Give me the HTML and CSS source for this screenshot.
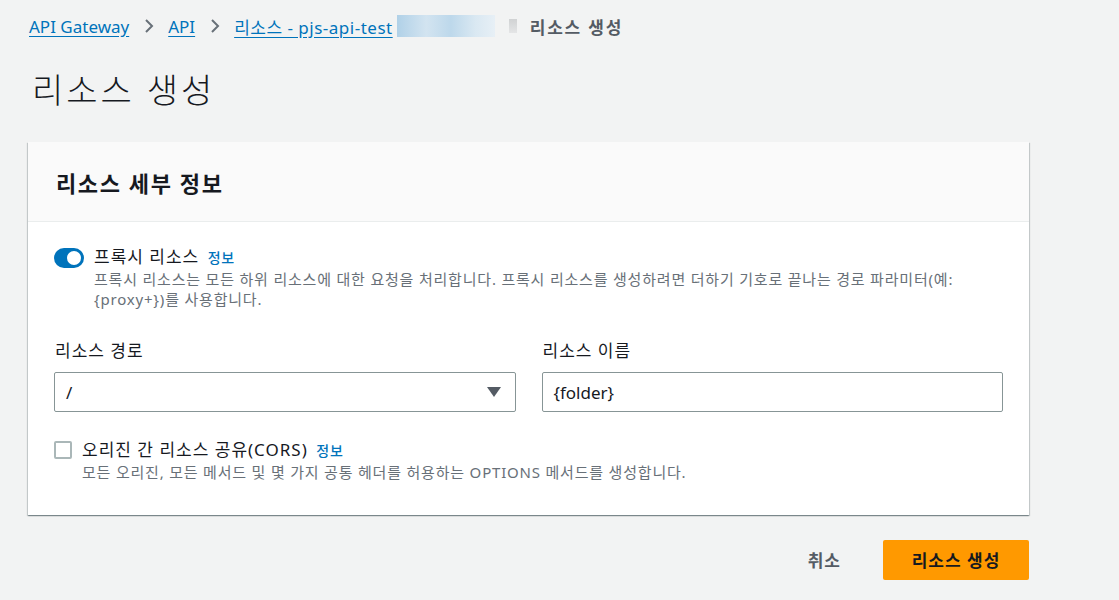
FILE: index.html
```html
<!DOCTYPE html>
<html lang="ko">
<head>
    <meta charset="UTF-8">
    <meta name="viewport" content="width=device-width, initial-scale=1.0">
    <title>리소스 생성</title>
    <link rel="stylesheet" href="styles.css">
</head>
<body>
    <div class="page">
        <nav class="breadcrumbs">
            <a href="#">API Gateway</a>
            <span class="sep">
                <svg width="12" height="16" viewBox="0 0 12 16"><path d="M3 2l6 6-6 6" fill="none" stroke="#687078" stroke-width="2"/></svg>
            </span>
            <a href="#">API</a>
            <span class="sep">
                <svg width="12" height="16" viewBox="0 0 12 16"><path d="M3 2l6 6-6 6" fill="none" stroke="#687078" stroke-width="2"/></svg>
            </span>
            <a href="#" class="masked">리소스 - pjs-api-test<span class="blur"></span></a>
            <span class="sep blur-sep"></span>
            <span class="current">리소스 생성</span>
        </nav>

        <h1 class="page-title">리소스 생성</h1>

        <div class="card">
            <div class="card-header">
                <h2>리소스 세부 정보</h2>
            </div>
            <div class="card-body">
                <div class="option">
                    <span class="toggle"><span class="knob"></span></span>
                    <div class="option-text">
                        <div class="option-label">프록시 리소스 <a href="#" class="info">정보</a></div>
                        <p class="option-desc">프록시 리소스는 모든 하위 리소스에 대한 요청을 처리합니다. 프록시 리소스를 생성하려면 더하기 기호로 끝나는 경로 파라미터(예: {proxy+})를 사용합니다.</p>
                    </div>
                </div>

                <div class="fields">
                    <div class="field">
                        <label>리소스 경로</label>
                        <div class="select">
                            <span>/</span>
                            <svg width="14" height="10" viewBox="0 0 14 10"><path d="M0 0h14L7 10z" fill="#545b64"/></svg>
                        </div>
                    </div>
                    <div class="field">
                        <label>리소스 이름</label>
                        <div class="input">{folder}</div>
                    </div>
                </div>

                <div class="option cors">
                    <span class="checkbox"></span>
                    <div class="option-text">
                        <div class="option-label">오리진 간 리소스 공유(CORS) <a href="#" class="info">정보</a></div>
                        <p class="option-desc">모든 오리진, 모든 메서드 및 몇 가지 공통 헤더를 허용하는 OPTIONS 메서드를 생성합니다.</p>
                    </div>
                </div>
            </div>
        </div>

        <div class="actions">
            <button class="btn-link">취소</button>
            <button class="btn-primary">리소스 생성</button>
        </div>
    </div>
</body>
</html>
```

FILE: styles.css
```css
body {
    margin: 0;
    background-color: #f2f3f3;
    font-family: "Noto Sans", "Noto Sans CJK KR", sans-serif;
    color: #16191f;
}
.page {
    padding: 14px 0 0 28px;
    width: 1001px;
}
.breadcrumbs {
    display: flex;
    align-items: center;
    height: 24px;
    font-size: 17px;
    padding-left: 1px;
}
.breadcrumbs a {
    color: #0073bb;
    text-decoration: underline;
    text-underline-offset: 3px;
}
.breadcrumbs .sep {
    display: flex;
    align-items: center;
    margin: 0 13px 0 14px;
}
.masked {
    display: flex;
    align-items: center;
    letter-spacing: 0.5px;
}
.blur {
    display: inline-block;
    width: 98px;
    height: 22px;
    margin-left: 4px;
    background: linear-gradient(90deg, #a9cde6, #cfe2f0 30%, #b7d5ea 55%, #d7e7f2 80%, #e6eff6);
    opacity: 0.9;
}
.blur-sep {
    width: 8px;
    height: 14px;
    background: linear-gradient(#d0d2d3, #e4e5e6);
    margin: 0 21px 0 16px;
}
.current {
    color: #545b64;
    font-weight: bold;
    letter-spacing: 1.8px;
}
.page-title {
    margin: 24px 0 0 4px;
    font-size: 34px;
    font-weight: 300;
    line-height: 56px;
    letter-spacing: 3px;
}
.card {
    margin-top: 24px;
    background-color: #fff;
    box-shadow: 0 1px 1px 0 rgba(0, 28, 36, 0.3), 1px 1px 1px 0 rgba(0, 28, 36, 0.15), -1px 1px 1px 0 rgba(0, 28, 36, 0.15);
}
.card-header {
    height: 79px;
    background-color: #fafafa;
    border-bottom: 1px solid #eaeded;
    display: flex;
    align-items: center;
    padding: 0 28px;
}
.card-header h2 {
    margin: 0;
    font-size: 22px;
    font-weight: bold;
    letter-spacing: 1.6px;
}
.card-body {
    padding: 24px 26px 33px;
}
.option {
    display: flex;
    gap: 10px;
}
.toggle {
    flex: none;
    width: 30px;
    height: 20px;
    margin-top: 2px;
    border-radius: 10px;
    background-color: #0073bb;
    position: relative;
}
.knob {
    position: absolute;
    right: 3px;
    top: 3px;
    width: 14px;
    height: 14px;
    border-radius: 50%;
    background-color: #fff;
}
.option-label {
    font-size: 17px;
    line-height: 22px;
    letter-spacing: 1px;
}
.info {
    color: #0073bb;
    font-size: 14px;
    font-weight: 500;
    letter-spacing: 0.8px;
    margin-left: 3px;
    text-decoration: none;
}
.option-desc {
    margin: 0;
    font-size: 15px;
    line-height: 20px;
    letter-spacing: 0.8px;
    color: #687078;
    max-width: 880px;
}
.fields {
    display: grid;
    grid-template-columns: 1fr 1fr;
    gap: 26px;
    margin-top: 31px;
}
.field label {
    display: block;
    font-size: 17px;
    line-height: 22px;
    letter-spacing: 1px;
    margin-bottom: 10px;
    padding-left: 1px;
    color: #16191f;
}
.select, .input {
    box-sizing: border-box;
    height: 40px;
    border: 1px solid #879596;
    border-radius: 2px;
    display: flex;
    align-items: center;
    justify-content: space-between;
    padding: 0 14px 0 11px;
    font-size: 17px;
}
.cors {
    margin-top: 27px;
}
.checkbox {
    flex: none;
    box-sizing: border-box;
    width: 18px;
    height: 18px;
    margin-top: 2px;
    border: 2px solid #aab7b8;
    border-radius: 2px;
}
.actions {
    display: flex;
    justify-content: flex-end;
    align-items: center;
    gap: 24px;
    margin-top: 24px;
}
.actions button {
    font-family: inherit;
    font-size: 17px;
    font-weight: bold;
    letter-spacing: 1px;
    border: none;
    cursor: pointer;
}
.btn-link {
    background: none;
    color: #545b64;
    padding: 8px 18px;
}
.btn-primary {
    width: 146px;
    height: 40px;
    border-radius: 2px;
    background-color: #ff9900;
    color: #16191f;
}
```
